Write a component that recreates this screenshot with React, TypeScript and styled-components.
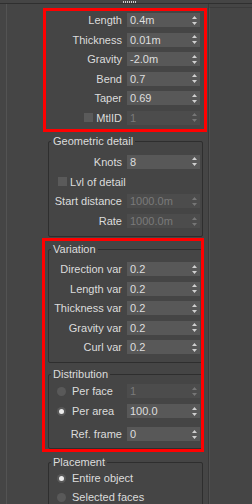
import React from "react";
import styled, { createGlobalStyle } from "styled-components";

const GlobalStyle = createGlobalStyle`
  html, body {
    margin: 0;
    padding: 0;
    background: #454545;
  }
  body {
    font-family: "Liberation Sans", Arial, sans-serif;
    font-size: 11px;
    color: #dcdcdc;
  }
`;

const Page = styled.div`
  width: 252px;
  height: 504px;
  overflow: hidden;
  display: flex;
  flex-direction: column;
`;

const TopBar = styled.div`
  height: 3px;
  flex: none;
  border-bottom: 1px solid #2f2f2f;
  display: flex;
  justify-content: center;
  align-items: flex-end;
`;

const Grip = styled.span`
  width: 14px;
  height: 2px;
  margin-left: 7px;
  background: repeating-linear-gradient(
    90deg,
    #cfcfcf 0 1px,
    transparent 1px 2px
  );
`;

const Body = styled.div`
  flex: 1;
  display: flex;
`;

const Gutter = styled.div`
  width: 6px;
  flex: none;
`;

const Rollout = styled.div`
  width: 160px;
  flex: none;
  border-left: 1px solid #535353;
  border-right: 1px solid #393939;
  padding: 9px 0 0 41px;
  box-sizing: content-box;
  display: flex;
  flex-direction: column;
`;

const Side = styled.div`
  flex: 1;
  border-left: 1px solid #4f4f4f;
  margin-top: 3px;
  border-top: 1px solid #3b3b3b;
`;

type FrameProps = { $t: number; $r: number; $b: number; $l: number; $mt?: number };

const Highlight = styled.div<FrameProps>`
  position: relative;
  width: 155px;
  margin-top: ${(p) => p.$mt ?? 0}px;
  display: flex;
  flex-direction: column;

  &::after {
    content: "";
    position: absolute;
    top: -${(p) => p.$t}px;
    right: -${(p) => p.$r}px;
    bottom: -${(p) => p.$b}px;
    left: -${(p) => p.$l}px;
    border: 3px solid #ff0000;
    pointer-events: none;
  }
`;

const Params = styled.div`
  display: flex;
  flex-direction: column;
  gap: 5.6px;
  padding-right: 3px;
`;

type GroupProps = { $mt: number; $pt: number; $pb: number; $gap: number };

const Group = styled.fieldset<GroupProps>`
  margin: ${(p) => p.$mt}px 0 0 0;
  width: 155px;
  min-width: 0;
  box-sizing: border-box;
  padding: ${(p) => p.$pt}px 2px ${(p) => p.$pb}px 0;
  border: 1px solid #2e2e2e;
  border-radius: 2px;
  display: flex;
  flex-direction: column;
  gap: ${(p) => p.$gap}px;
`;

const Legend = styled.legend`
  margin-left: 2px;
  padding: 0 2px;
  font-size: 11px;
  line-height: 13px;
  color: #dcdcdc;
`;

const Row = styled.div<{ $mt?: number }>`
  display: flex;
  align-items: center;
  height: 14px;
  gap: 5px;
  margin-top: ${(p) => p.$mt ?? 0}px;
`;

const Label = styled.span`
  flex: 1;
  display: flex;
  justify-content: flex-end;
  align-items: center;
  gap: 3px;
  white-space: nowrap;
`;

const OptionLabel = styled.label<{ $pl: number; $gap: number }>`
  flex: 1;
  display: flex;
  align-items: center;
  gap: ${(p) => p.$gap}px;
  padding-left: ${(p) => p.$pl}px;
  white-space: nowrap;
`;

const Spin = styled.div<{ $off?: boolean }>`
  width: 73px;
  height: 14px;
  flex: none;
  box-sizing: border-box;
  padding: 0 3px 0 3px;
  display: flex;
  align-items: center;
  justify-content: space-between;
  background: ${(p) => (p.$off ? "#4c4c4c" : "#585858")};
  color: ${(p) => (p.$off ? "#7a7a7a" : "#dedede")};
  font-size: 11px;
`;

const Check = styled.span`
  width: 9px;
  height: 9px;
  flex: none;
  background: #5a5a5a;
`;

const Radio = styled.span<{ $on?: boolean }>`
  width: 9px;
  height: 9px;
  flex: none;
  border-radius: 50%;
  background: #595959;
  display: inline-flex;
  align-items: center;
  justify-content: center;

  &::after {
    content: "";
    width: 5px;
    height: 5px;
    border-radius: 50%;
    background: ${(p) => (p.$on ? "#ececec" : "transparent")};
  }
`;

const Arrows = ({ off }: { off?: boolean }) => (
  <svg width="5" height="9" viewBox="0 0 5 9">
    <path d="M2.5 0 L5 3 L0 3 Z M0 6 L5 6 L2.5 9 Z" fill={off ? "#767676" : "#cfcfcf"} />
  </svg>
);

type SpinnerProps = { value: string; off?: boolean };

const Spinner = ({ value, off }: SpinnerProps) => (
  <Spin $off={off}>
    <span>{value}</span>
    <Arrows off={off} />
  </Spin>
);

const params = [
  { label: "Length", value: "0.4m" },
  { label: "Thickness", value: "0.01m" },
  { label: "Gravity", value: "-2.0m" },
  { label: "Bend", value: "0.7" },
  { label: "Taper", value: "0.69" },
];

const variation = [
  { label: "Direction var", value: "0.2" },
  { label: "Length var", value: "0.2" },
  { label: "Thickness var", value: "0.2" },
  { label: "Gravity var", value: "0.2" },
  { label: "Curl var", value: "0.2" },
];

export default function App() {
  return (
    <Page>
      <GlobalStyle />
      <TopBar>
        <Grip />
      </TopBar>
      <Body>
        <Gutter />
        <Rollout>
          <Highlight $t={5} $r={4} $b={7} $l={5}>
            <Params>
              {params.map((p) => (
                <Row key={p.label}>
                  <Label>{p.label}</Label>
                  <Spinner value={p.value} />
                </Row>
              ))}
              <Row>
                <Label>
                  <Check />
                  MtlID
                </Label>
                <Spinner value="1" off />
              </Row>
            </Params>
          </Highlight>

          <Group $mt={10} $pt={7} $pb={8} $gap={5.7}>
            <Legend>Geometric detail</Legend>
            <Row>
              <Label>Knots</Label>
              <Spinner value="8" />
            </Row>
            <Row>
              <OptionLabel $pl={9} $gap={3}>
                <Check />
                Lvl of detail
              </OptionLabel>
            </Row>
            <Row>
              <Label>Start distance</Label>
              <Spinner value="1000.0m" off />
            </Row>
            <Row>
              <Label>Rate</Label>
              <Spinner value="1000.0m" off />
            </Row>
          </Group>

          <Highlight $mt={5.5} $t={4.5} $r={1} $b={3} $l={6}>
            <Group $mt={0} $pt={6.5} $pb={8} $gap={5.5}>
              <Legend>Variation</Legend>
              {variation.map((v) => (
                <Row key={v.label}>
                  <Label>{v.label}</Label>
                  <Spinner value={v.value} />
                </Row>
              ))}
            </Group>

            <Group $mt={4.5} $pt={3.5} $pb={7} $gap={6}>
              <Legend>Distribution</Legend>
              <Row>
                <OptionLabel $pl={8} $gap={6}>
                  <Radio />
                  Per face
                </OptionLabel>
                <Spinner value="1" off />
              </Row>
              <Row>
                <OptionLabel $pl={8} $gap={6}>
                  <Radio $on />
                  Per area
                </OptionLabel>
                <Spinner value="100.0" />
              </Row>
              <Row $mt={3}>
                <Label>Ref. frame</Label>
                <Spinner value="0" />
              </Row>
            </Group>
          </Highlight>

          <Group $mt={6.5} $pt={2.5} $pb={8} $gap={5}>
            <Legend>Placement</Legend>
            <Row>
              <OptionLabel $pl={8} $gap={6}>
                <Radio $on />
                Entire object
              </OptionLabel>
            </Row>
            <Row>
              <OptionLabel $pl={8} $gap={6}>
                <Radio />
                Selected faces
              </OptionLabel>
            </Row>
          </Group>
        </Rollout>
        <Side />
      </Body>
    </Page>
  );
}
